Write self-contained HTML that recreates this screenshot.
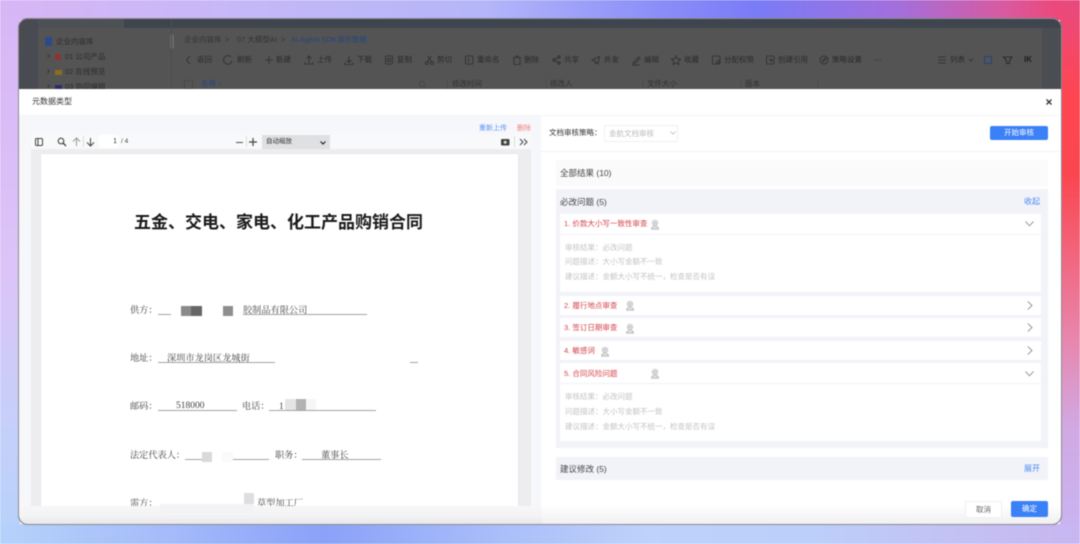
<!DOCTYPE html>
<html><head><meta charset="utf-8"><style>
*{box-sizing:border-box;margin:0;padding:0}
html,body{width:1080px;height:544px;overflow:hidden}
body{position:relative;font-family:"Liberation Sans","Noto Sans CJK SC",sans-serif;background:#fff}
#r{position:absolute;inset:0;filter:blur(.45px)}
.a{position:absolute;white-space:nowrap}
.t{font-size:7.5px;line-height:10px;color:#666}
.k{font-size:7.5px;line-height:10px;color:#2a2a2a;position:absolute;white-space:nowrap;top:55px}
.q{font-size:7.5px;line-height:10px;color:#303030;position:absolute;white-space:nowrap;top:79px}
.h{color:#c4c4c4}
.ser{font-family:"Liberation Serif","Noto Serif CJK SC",serif;font-size:9.2px;line-height:12px;color:#444}
.row{position:absolute;left:560px;width:481px;background:#fff}
.red{position:absolute;left:4px;font-size:7.5px;line-height:10px;color:#d4424a;white-space:nowrap}
.u{position:absolute;height:1px;background:#a4a4a4}
.bl{position:absolute}
svg{position:absolute;overflow:visible}
</style></head><body><div id="r">
<!-- gradient background -->
<div class="a" style="left:0;top:0;width:1080px;height:20px;background:linear-gradient(90deg,#d8b6f6 0%,#c6b8f8 22%,#b4b6f9 45%,#8d90f8 60%,#797cf7 70%,#a36fdc 83%,#d85aa0 93%,#f5406a 100%)"></div>
<div class="a" style="left:0;top:0;width:20px;height:544px;background:linear-gradient(180deg,#d8b6f6 0%,#dcc4f8 50%,#c6d0fa 78%,#b6d2fb 100%)"></div>
<div class="a" style="left:1060px;top:0;width:20px;height:544px;background:linear-gradient(180deg,#e84a80 0%,#ff4650 18%,#fb4650 32%,#e886ac 62%,#d2a8e2 78%,#c8b6f4 100%)"></div>
<div class="a" style="left:0;top:524px;width:1080px;height:20px;background:linear-gradient(90deg,#b6d2fb 0%,#a6bcfa 15%,#8aa2f8 30%,#a8bcfa 45%,#bfd2fb 60%,#bccffa 75%,#c4c0f4 90%,#c8b6f2 100%)"></div>
<!-- window -->
<div class="a" style="left:18px;top:18px;width:1044px;height:507px;border-radius:10px;background:#545454;overflow:hidden">
 <div class="a" style="left:106px;top:0;width:938px;height:10px;background:#3f454e"></div>
 <div class="a" style="left:0;top:0;width:20px;height:72px;background:#484b52"></div>
 <div class="a" style="left:20px;top:0;width:86px;height:10px;background:#4d5055"></div>
 <div class="a" style="left:1024px;top:10px;width:20px;height:62px;background:#4a4d52"></div>
 <div class="a" style="left:152px;top:16px;width:4px;height:15px;background:#6a6a6a;border-radius:2px"></div>
 <div class="a" style="left:153px;top:0;width:1px;height:72px;background:#4e4e4e"></div>
</div>
<!-- blurred app behind -->
<div class="a" style="left:45px;top:37px;width:7px;height:9px;background:#2b4a8a;border-radius:1px"></div>
<div class="a t" style="left:56px;top:37px;color:#2b2b2b">企业内容库</div>
<div class="a t" style="left:65px;top:52px;color:#2b2b2b">01 公司产品</div>
<div class="a" style="left:55px;top:54px;width:6px;height:6px;background:#a02a2a;border-radius:50%"></div>
<div class="a t" style="left:65px;top:67px;color:#2b2b2b">02 在线预览</div>
<div class="a" style="left:55px;top:70px;width:7px;height:5px;background:#8a6d20"></div>
<div class="a t" style="left:65px;top:82px;color:#2b2b2b">03 协同编辑</div>
<div class="a" style="left:55px;top:85px;width:7px;height:5px;background:#2b2b6a"></div>
<div class="a t" style="left:184px;top:35px;color:#333">企业内容库</div>
<div class="a t" style="left:225px;top:35px;color:#333">&gt;</div>
<div class="a t" style="left:237px;top:35px;color:#333">07 大模型AI</div>
<div class="a t" style="left:281px;top:35px;color:#333">&gt;</div>
<div class="a t" style="left:291px;top:35px;color:#24457f">AI Agent SDK演示数据</div>
<svg style="left:0;top:0" width="1080" height="544"><g fill="none" stroke="#2c2c2c" stroke-width=".8">
<path d="M190 56L186.500 60L190 64"/>
<path d="M231 57A4.300 4.300 0 1 0 232 61"/>
<path d="M265 60H273M269 56V64"/>
<path d="M309 63V56M306.500 58.500L309 56L311.500 58.500M305 62V64H313V62"/>
<path d="M349 56V62M346.500 60L349 62.500L351.500 60M345 62.500V64.500H353V62.500"/>
<rect x="385.500" y="56" width="7" height="8" rx="1"/><rect x="387.500" y="58.500" width="3" height="3"/>
<circle cx="427" cy="63" r="1.500"/><circle cx="432" cy="63" r="1.500"/><path d="M427.500 56L431.500 61.500M431.500 56L427.500 61.500"/>
<rect x="465.500" y="56" width="7.500" height="8" rx="1"/><path d="M468.500 58V62"/>
<path d="M513 57.500H521M514 58V64.500H520V58M516 57.500V56H518V57.500"/>
<circle cx="554" cy="60" r="1.200"/><circle cx="559" cy="57" r="1.200"/><circle cx="559" cy="63" r="1.200"/><path d="M555 59.500L558 57.500M555 60.500L558 62.500"/>
<path d="M592 60L599.500 56.500L598 64L595.500 61.500ZM595.500 61.500V64"/>
<path d="M633 63L638.500 57L640 58.500L634.500 64ZM632 65H640"/>
<path d="M676 55.800L677.500 58.800L680.500 59.200L678.300 61.400L678.800 64.500L676 63L673.200 64.500L673.700 61.400L671.500 59.200L674.500 58.800Z"/>
<rect x="712.500" y="56" width="7.500" height="8" rx="1"/><circle cx="718" cy="62" r="1.500"/>
<rect x="766.500" y="56" width="7.500" height="8" rx="1"/><path d="M769 58.500L772 61M772 58.500V61H769.500"/>
<circle cx="824" cy="60" r="4"/><path d="M822.500 61.500L823.500 59L826 58L825 60.500Z"/>
<path d="M934 57H942M934 60H942M934 63H942" transform="translate(4 0)"/>
<path d="M969 59L971 61L973 59"/>
<path d="M1003.500 57H1012L1009.500 60.500V63.500L1006.500 63.500V60.500Z" stroke-width="1.100"/>
<rect x="184.500" y="80.500" width="8" height="8.500" rx="1" stroke="#444"/>
<circle cx="422" cy="84" r="2.700" stroke="#444"/><path d="M424 86L426 88" stroke="#444"/>
<path d="M447 79V89M546 79V89M643 79V89M741 79V89M818 79V89" stroke="#4a4a4a"/>
<path d="M47.500 54L49.500 56L47.500 58M47.500 69L49.500 71L47.500 73M47.500 84L49.500 86L47.500 88" stroke="#333"/>
</g><rect x="984.500" y="56.500" width="7" height="7" fill="none" stroke="#24457f"/>
<circle cx="875" cy="60" r=".6" fill="#333"/><circle cx="877.500" cy="60" r=".6" fill="#333"/><circle cx="880" cy="60" r=".6" fill="#333"/></svg>
<div class="k" style="left:197px">返回</div><div class="k" style="left:237px">刷新</div><div class="k" style="left:276px">新建</div><div class="k" style="left:317px">上传</div><div class="k" style="left:357px">下载</div><div class="k" style="left:397px">复制</div><div class="k" style="left:437px">剪切</div><div class="k" style="left:477px">重命名</div><div class="k" style="left:524px">删除</div><div class="k" style="left:564px">共享</div><div class="k" style="left:604px">外发</div><div class="k" style="left:644px">编辑</div><div class="k" style="left:684px">收藏</div><div class="k" style="left:724px">分配权限</div><div class="k" style="left:778px">创建引用</div><div class="k" style="left:832px">策略设置</div><div class="k" style="left:950px">列表</div>
<div class="k" style="left:1024px;color:#1e1e1e;font-weight:bold;font-size:8px">IK</div>
<div class="q" style="left:201px;color:#24457f">名称 ↑</div><div class="q" style="left:452px">修改时间</div><div class="q" style="left:550px">修改人</div><div class="q" style="left:647px">文件大小</div><div class="q" style="left:745px">版本</div>
<!-- modal -->
<div class="a" style="left:19px;top:89px;width:1042px;height:435px;background:#fff;border-radius:0 0 9px 9px;overflow:hidden">
 <div class="a" style="left:0;top:26px;width:522px;height:409px;background:#f6f7fa"></div>
 <div class="a" style="left:0;top:26px;width:1042px;height:1px;background:#f4f4f6"></div>
</div>
<div class="a t" style="left:32px;top:97px;font-size:8px;color:#333">元数据类型</div>
<svg style="left:1045px;top:98px" width="8" height="8"><path d="M1.500 1.500L6.500 6.500M6.500 1.500L1.500 6.500" stroke="#333" stroke-width="1.300"/></svg>
<!-- left -->
<div class="a t" style="left:479px;top:124px;font-size:7px;color:#5b93f5">重新上传</div>
<div class="a t" style="left:517px;top:124px;font-size:7px;color:#f08080">删除</div>
<div class="a" style="left:31px;top:134px;width:500px;height:15px;background:#f8f9fa"></div>
<div class="a" style="left:31px;top:149px;width:500px;height:357px;background:#ededef"></div>
<div class="a" style="left:41px;top:154px;width:477px;height:352px;background:#fff;box-shadow:0 0 1px #ccc"></div>
<svg style="left:35px;top:138px" width="8" height="8"><rect x=".5" y=".5" width="7" height="7" rx="1" fill="none" stroke="#444"/><path d="M3 1V7" stroke="#444"/></svg>
<svg style="left:57px;top:137px" width="10" height="10"><circle cx="4" cy="4" r="2.800" fill="none" stroke="#444" stroke-width="1.100"/><path d="M6 6L9 9" stroke="#444" stroke-width="1.300"/></svg>
<svg style="left:72px;top:137px" width="9" height="10"><path d="M4.500 9V1M1 4.500L4.500 1L8 4.500" fill="none" stroke="#999"/></svg>
<div class="a" style="left:83px;top:136px;width:1px;height:11px;background:#ddd"></div>
<svg style="left:86px;top:137px" width="9" height="10"><path d="M4.500 1V9M1 5.500L4.500 9L8 5.500" fill="none" stroke="#444"/></svg>
<div class="a" style="left:99px;top:135px;width:20px;height:13px;background:#fff;border-radius:2px;font-size:7px;line-height:13px;text-align:right;padding-right:2px;color:#333">1</div>
<div class="a" style="left:121px;top:137px;font-size:6.500px;line-height:9px;color:#444">/ 4</div>
<div class="a" style="left:236px;top:141.500px;width:7px;height:1.300px;background:#555"></div>
<div class="a" style="left:246px;top:136px;width:1px;height:11px;background:#ddd"></div>
<svg style="left:249px;top:138px" width="8" height="8"><path d="M4 0V8M0 4H8" stroke="#444" stroke-width="1.200"/></svg>
<div class="a" style="left:262px;top:135px;width:68px;height:14px;background:#dfe0e2;font-size:6.500px;line-height:14px;padding-left:4px;color:#333">自动缩放</div>
<svg style="left:320px;top:141px" width="6" height="4"><path d="M.5 .5L3 3L5.500 .5" fill="none" stroke="#222" stroke-width="1.200"/></svg>
<svg style="left:501px;top:138px" width="9" height="8"><rect x="0" y="1" width="8.500" height="6.500" rx="1" fill="#444"/><circle cx="4.200" cy="4.200" r="1.500" fill="#ddd"/></svg>
<div class="a" style="left:514px;top:136px;width:1px;height:11px;background:#ddd"></div>
<svg style="left:519px;top:138px" width="9" height="8"><path d="M1 1L4 4L1 7M5 1L8 4L5 7" fill="none" stroke="#444"/></svg>
<!-- doc -->
<div class="a" style="left:134px;top:212px;font-size:17px;line-height:22px;font-weight:bold;color:#1a1a1a">五金、交电、家电、化工产品购销合同</div>
<div class="a ser" style="left:130px;top:304px">供方：</div>
<div class="u" style="left:158px;top:314px;width:13px"></div>
<div class="bl" style="left:181px;top:306px;width:10px;height:10px;background:#8a8a8a"></div>
<div class="bl" style="left:191px;top:306px;width:11px;height:10px;background:#666"></div>
<div class="bl" style="left:222.500px;top:306px;width:10.500px;height:10px;background:#8e8e8e"></div>
<div class="a ser" style="left:243px;top:304px">胶制品有限公司</div>
<div class="u" style="left:243px;top:314px;width:124px"></div>
<div class="a ser" style="left:130px;top:352px">地址：</div>
<div class="a ser" style="left:167px;top:352px">深圳市龙岗区龙城街</div>
<div class="u" style="left:158px;top:362px;width:117px"></div>
<div class="u" style="left:410px;top:362px;width:8px"></div>
<div class="a ser" style="left:130px;top:400px">邮码：</div>
<div class="a ser" style="left:176px;top:400px;font-size:9.500px">518000</div>
<div class="u" style="left:158px;top:410px;width:79px"></div>
<div class="a ser" style="left:242px;top:400px">电话：</div>
<div class="a ser" style="left:279px;top:400px">1</div>
<div class="u" style="left:269px;top:410px;width:107px"></div>
<div class="bl" style="left:285px;top:399px;width:11px;height:11px;background:#e4e4e4"></div>
<div class="bl" style="left:296px;top:399px;width:10px;height:11px;background:#b2b2b2"></div>
<div class="bl" style="left:306px;top:399px;width:10px;height:11px;background:#f6f6f6"></div>
<div class="a ser" style="left:130px;top:449px">法定代表人：</div>
<div class="u" style="left:185px;top:459px;width:17px"></div>
<div class="u" style="left:233px;top:459px;width:36px"></div>
<div class="bl" style="left:202px;top:452px;width:10px;height:10px;background:#d9d9d9"></div>
<div class="bl" style="left:222px;top:452px;width:11px;height:10px;background:#fafafa"></div>
<div class="a ser" style="left:275px;top:449px">职务：</div>
<div class="a ser" style="left:321px;top:449px">董事长</div>
<div class="u" style="left:302px;top:459px;width:79px"></div>
<div class="a ser" style="left:130px;top:497px">需方：</div>
<div class="bl" style="left:243.500px;top:493px;width:10.500px;height:11px;background:#dedede"></div>
<div class="a ser" style="left:257px;top:497px">草型加工厂</div>
<!-- bottom band -->
<div class="a" style="left:19px;top:505.500px;width:523px;height:19px;background:linear-gradient(180deg,#f7f7f9 0%,#f3f3f5 55%,#e6e6e8 100%);border-radius:0 0 0 9px"></div>
<div class="a" style="left:160px;top:504px;width:94px;height:9px;background:#f3f3f5"></div>
<div class="a" style="left:542px;top:505px;width:519px;height:19px;background:linear-gradient(180deg,#fff,#f0f0f2);border-radius:0 0 9px 0"></div>
<!-- right -->
<div class="a" style="left:541px;top:116px;width:520px;height:389px;background:#fff"></div>
<div class="a" style="left:541px;top:151px;width:520px;height:1px;background:#f1f2f5"></div>
<div class="a t" style="left:549px;top:128px;font-size:7.500px;color:#333">文档审核策略：</div>
<div class="a" style="left:604px;top:125px;width:74px;height:17px;border:1px solid #f0f0f0;border-radius:2px;font-size:7.500px;line-height:15px;padding-left:4px;color:#bcbcbc">金航文档审核</div>
<svg style="left:670px;top:131px" width="6" height="4"><path d="M.5 .5L3 3L5.500 .5" fill="none" stroke="#bbb" stroke-width=".8"/></svg>
<div class="a" style="left:990px;top:126px;width:58px;height:14px;background:#3a80f7;border-radius:2px;font-size:7.500px;line-height:14px;text-align:center;color:#fff">开始审核</div>
<div class="a" style="left:556px;top:160px;width:492px;height:26px;background:#fafafb"></div>
<div class="a t" style="left:560px;top:168px;font-size:8.500px;color:#444">全部结果 (10)</div>
<div class="a" style="left:556px;top:189px;width:492px;height:259px;background:#f2f3f8"></div>
<div class="a t" style="left:560px;top:197px;font-size:8.500px;color:#444">必改问题 (5)</div>
<div class="a t" style="left:1024px;top:197px;font-size:8px;color:#4a88f5">收起</div>
<div class="row" style="top:214px;height:20px"><div class="red" style="top:5px">1. 价款大小写一致性审查</div></div>
<div class="row" style="top:235px;height:57px"></div>
<div class="a t h" style="left:565px;top:243px">审核结果：必改问题</div>
<div class="a t h" style="left:565px;top:257px">问题描述：大小写金额不一致</div>
<div class="a t h" style="left:565px;top:272px">建议描述：金额大小写不统一，检查是否有误</div>
<div class="row" style="top:296px;height:18.500px"><div class="red" style="top:5px">2. 履行地点审查</div></div>
<div class="row" style="top:318px;height:19px"><div class="red" style="top:5px">3. 签订日期审查</div></div>
<div class="row" style="top:341px;height:19px"><div class="red" style="top:5px">4. 敏感词</div></div>
<div class="row" style="top:363px;height:20px"><div class="red" style="top:6px">5. 合同风险问题</div></div>
<div class="row" style="top:384px;height:57px"></div>
<div class="a t h" style="left:565px;top:392px">审核结果：必改问题</div>
<div class="a t h" style="left:565px;top:407px">问题描述：大小写金额不一致</div>
<div class="a t h" style="left:565px;top:422px">建议描述：金额大小写不统一，检查是否有误</div>
<svg style="left:651px;top:220px" width="9" height="10"><g id="p" fill="none" stroke="#a8a8a8" stroke-width=".7"><circle cx="4" cy="3" r="2.700"/><circle cx="4" cy="3" r="1.100"/><path d="M.5 9.300C.5 7 2 6.200 4 6.200S7.500 7 7.500 9.300Z"/><path d="M1 8H7"/></g></svg>
<svg style="left:626px;top:301px" width="9" height="10"><use href="#p"/></svg>
<svg style="left:626px;top:324px" width="9" height="10"><use href="#p"/></svg>
<svg style="left:601px;top:347px" width="9" height="10"><use href="#p"/></svg>
<svg style="left:651px;top:369px" width="9" height="10"><use href="#p"/></svg>
<svg style="left:1025px;top:221px" width="9" height="6"><path id="cd" d="M.5 .5L4.500 4.800L8.500 .5" fill="none" stroke="#999"/></svg>
<svg style="left:1025px;top:371px" width="9" height="6"><use href="#cd"/></svg>
<svg style="left:1027px;top:301px" width="6" height="9"><path id="cr" d="M.8 .5L5 4.500L.8 8.500" fill="none" stroke="#999"/></svg>
<svg style="left:1027px;top:323px" width="6" height="9"><use href="#cr"/></svg>
<svg style="left:1027px;top:346px" width="6" height="9"><use href="#cr"/></svg>
<div class="a" style="left:556px;top:457px;width:492px;height:23px;background:#f2f3f8"></div>
<div class="a t" style="left:560px;top:464px;font-size:8.500px;color:#444">建议修改 (5)</div>
<div class="a t" style="left:1024px;top:464px;font-size:8px;color:#4a88f5">展开</div>
<div class="a" style="left:965px;top:501px;width:37px;height:17px;background:#fff;border:1px solid #efeff1;border-radius:2px;font-size:7.500px;line-height:15px;text-align:center;color:#666">取消</div>
<div class="a" style="left:1011px;top:501px;width:37px;height:16px;background:#3a80f7;border-radius:2px;font-size:7.500px;line-height:16px;text-align:center;color:#fff">确定</div>
<!-- window edge -->
<div class="a" style="left:18px;top:18px;width:1044px;height:507px;border-radius:10px;border:1.500px solid #8b8b8f;pointer-events:none"></div>
</div></body></html>
